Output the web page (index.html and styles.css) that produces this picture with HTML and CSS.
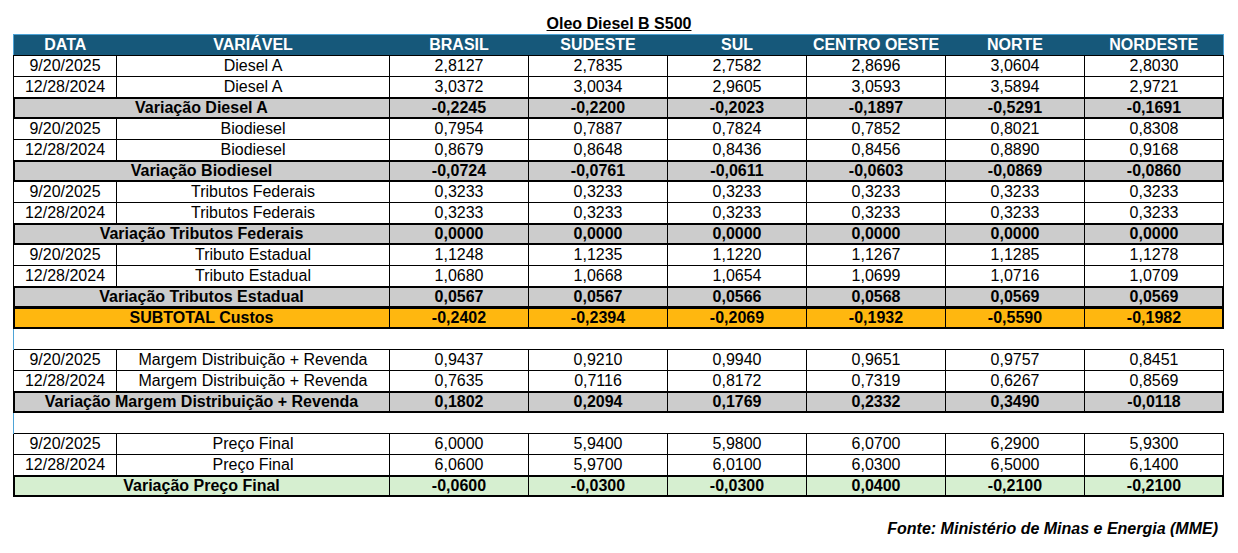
FILE: index.html
```html
<!DOCTYPE html>
<html lang="pt">
<head>
<meta charset="utf-8">
<title>Oleo Diesel B S500</title>
<link rel="stylesheet" href="styles.css">
</head>
<body>
<div class="page">
  <h1 class="title">Oleo Diesel B S500</h1>
  <table class="grid">
    <colgroup>
      <col class="c-date"><col class="c-var">
      <col class="c-num"><col class="c-num"><col class="c-num"><col class="c-num"><col class="c-num"><col class="c-num">
    </colgroup>
    <thead>
      <tr class="head">
        <th>DATA</th><th>VARIÁVEL</th><th>BRASIL</th><th>SUDESTE</th><th>SUL</th><th>CENTRO OESTE</th><th>NORTE</th><th>NORDESTE</th>
      </tr>
    </thead>
    <tbody>
      <tr><td>9/20/2025</td><td>Diesel A</td><td>2,8127</td><td>2,7835</td><td>2,7582</td><td>2,8696</td><td>3,0604</td><td>2,8030</td></tr>
      <tr><td>12/28/2024</td><td>Diesel A</td><td>3,0372</td><td>3,0034</td><td>2,9605</td><td>3,0593</td><td>3,5894</td><td>2,9721</td></tr>
      <tr class="var"><td colspan="2">Variação Diesel A</td><td>-0,2245</td><td>-0,2200</td><td>-0,2023</td><td>-0,1897</td><td>-0,5291</td><td>-0,1691</td></tr>

      <tr><td>9/20/2025</td><td>Biodiesel</td><td>0,7954</td><td>0,7887</td><td>0,7824</td><td>0,7852</td><td>0,8021</td><td>0,8308</td></tr>
      <tr><td>12/28/2024</td><td>Biodiesel</td><td>0,8679</td><td>0,8648</td><td>0,8436</td><td>0,8456</td><td>0,8890</td><td>0,9168</td></tr>
      <tr class="var"><td colspan="2">Variação Biodiesel</td><td>-0,0724</td><td>-0,0761</td><td>-0,0611</td><td>-0,0603</td><td>-0,0869</td><td>-0,0860</td></tr>

      <tr><td>9/20/2025</td><td>Tributos Federais</td><td>0,3233</td><td>0,3233</td><td>0,3233</td><td>0,3233</td><td>0,3233</td><td>0,3233</td></tr>
      <tr><td>12/28/2024</td><td>Tributos Federais</td><td>0,3233</td><td>0,3233</td><td>0,3233</td><td>0,3233</td><td>0,3233</td><td>0,3233</td></tr>
      <tr class="var"><td colspan="2">Variação Tributos Federais</td><td>0,0000</td><td>0,0000</td><td>0,0000</td><td>0,0000</td><td>0,0000</td><td>0,0000</td></tr>

      <tr><td>9/20/2025</td><td>Tributo Estadual</td><td>1,1248</td><td>1,1235</td><td>1,1220</td><td>1,1267</td><td>1,1285</td><td>1,1278</td></tr>
      <tr><td>12/28/2024</td><td>Tributo Estadual</td><td>1,0680</td><td>1,0668</td><td>1,0654</td><td>1,0699</td><td>1,0716</td><td>1,0709</td></tr>
      <tr class="var"><td colspan="2">Variação Tributos Estadual</td><td>0,0567</td><td>0,0567</td><td>0,0566</td><td>0,0568</td><td>0,0569</td><td>0,0569</td></tr>
      <tr class="var subtotal"><td colspan="2">SUBTOTAL Custos</td><td>-0,2402</td><td>-0,2394</td><td>-0,2069</td><td>-0,1932</td><td>-0,5590</td><td>-0,1982</td></tr>

      <tr class="blank"><td colspan="8"></td></tr>

      <tr><td>9/20/2025</td><td>Margem Distribuição + Revenda</td><td>0,9437</td><td>0,9210</td><td>0,9940</td><td>0,9651</td><td>0,9757</td><td>0,8451</td></tr>
      <tr><td>12/28/2024</td><td>Margem Distribuição + Revenda</td><td>0,7635</td><td>0,7116</td><td>0,8172</td><td>0,7319</td><td>0,6267</td><td>0,8569</td></tr>
      <tr class="var"><td colspan="2">Variação Margem Distribuição + Revenda</td><td>0,1802</td><td>0,2094</td><td>0,1769</td><td>0,2332</td><td>0,3490</td><td>-0,0118</td></tr>

      <tr class="blank"><td colspan="8"></td></tr>

      <tr><td>9/20/2025</td><td>Preço Final</td><td>6,0000</td><td>5,9400</td><td>5,9800</td><td>6,0700</td><td>6,2900</td><td>5,9300</td></tr>
      <tr><td>12/28/2024</td><td>Preço Final</td><td>6,0600</td><td>5,9700</td><td>6,0100</td><td>6,0300</td><td>6,5000</td><td>6,1400</td></tr>
      <tr class="var final"><td colspan="2">Variação Preço Final</td><td>-0,0600</td><td>-0,0300</td><td>-0,0300</td><td>0,0400</td><td>-0,2100</td><td>-0,2100</td></tr>
    </tbody>
  </table>
  <p class="source">Fonte: Ministério de Minas e Energia (MME)</p>
</div>
</body>
</html>
```
FILE: styles.css
```css
html, body {
  margin: 0;
  padding: 0;
  background: #ffffff;
}

.page {
  width: 1238px;
  padding-top: 15px;
  font-family: "Liberation Sans", Arial, sans-serif;
  font-size: 16px;
  color: #000;
}

.title {
  margin: 0 0 1px 0;
  font-size: 16px;
  line-height: 18px;
  font-weight: bold;
  text-align: center;
  text-decoration: underline;
}

.grid {
  margin-left: 13px;
  width: 1211px;
  table-layout: fixed;
  border-collapse: collapse;
  border-spacing: 0;
}

.c-date { width: 103px; }
.c-var { width: 273px; }
.c-num { width: 139px; }

.grid th,
.grid td {
  padding: 0;
  height: 20px;
  line-height: 18px;
  text-align: center;
  vertical-align: middle;
  white-space: nowrap;
  overflow: hidden;
}

.grid td {
  border: 1px solid #000;
}

.head th {
  background: #16587a;
  color: #ffffff;
  font-weight: bold;
  border-top: 1px solid #4da3d6;
  border-bottom: 1px solid #000;
}

.head th:first-child { border-left: 1px solid #4da3d6; }
.head th:last-child { border-right: 1px solid #4da3d6; }

.var td {
  background: #cccccc;
  font-weight: bold;
  box-shadow: inset 0 1px 0 #000, inset 0 -1px 0 #000;
}

.var td:first-child {
  box-shadow: inset 0 1px 0 #000, inset 0 -1px 0 #000, inset 1px 0 0 #000;
}

.var td:last-child {
  box-shadow: inset 0 1px 0 #000, inset 0 -1px 0 #000, inset -1px 0 0 #000;
}

.subtotal td { background: #ffb70f; }
.final td { background: #d6efd0; }

.blank td {
  border: none;
  border-left: 1px solid #4da3d6;
  background: #ffffff;
}

.source {
  margin: 23px 20px 0 0;
  text-align: right;
  font-size: 16px;
  line-height: 18px;
  font-weight: bold;
  font-style: italic;
}
```
